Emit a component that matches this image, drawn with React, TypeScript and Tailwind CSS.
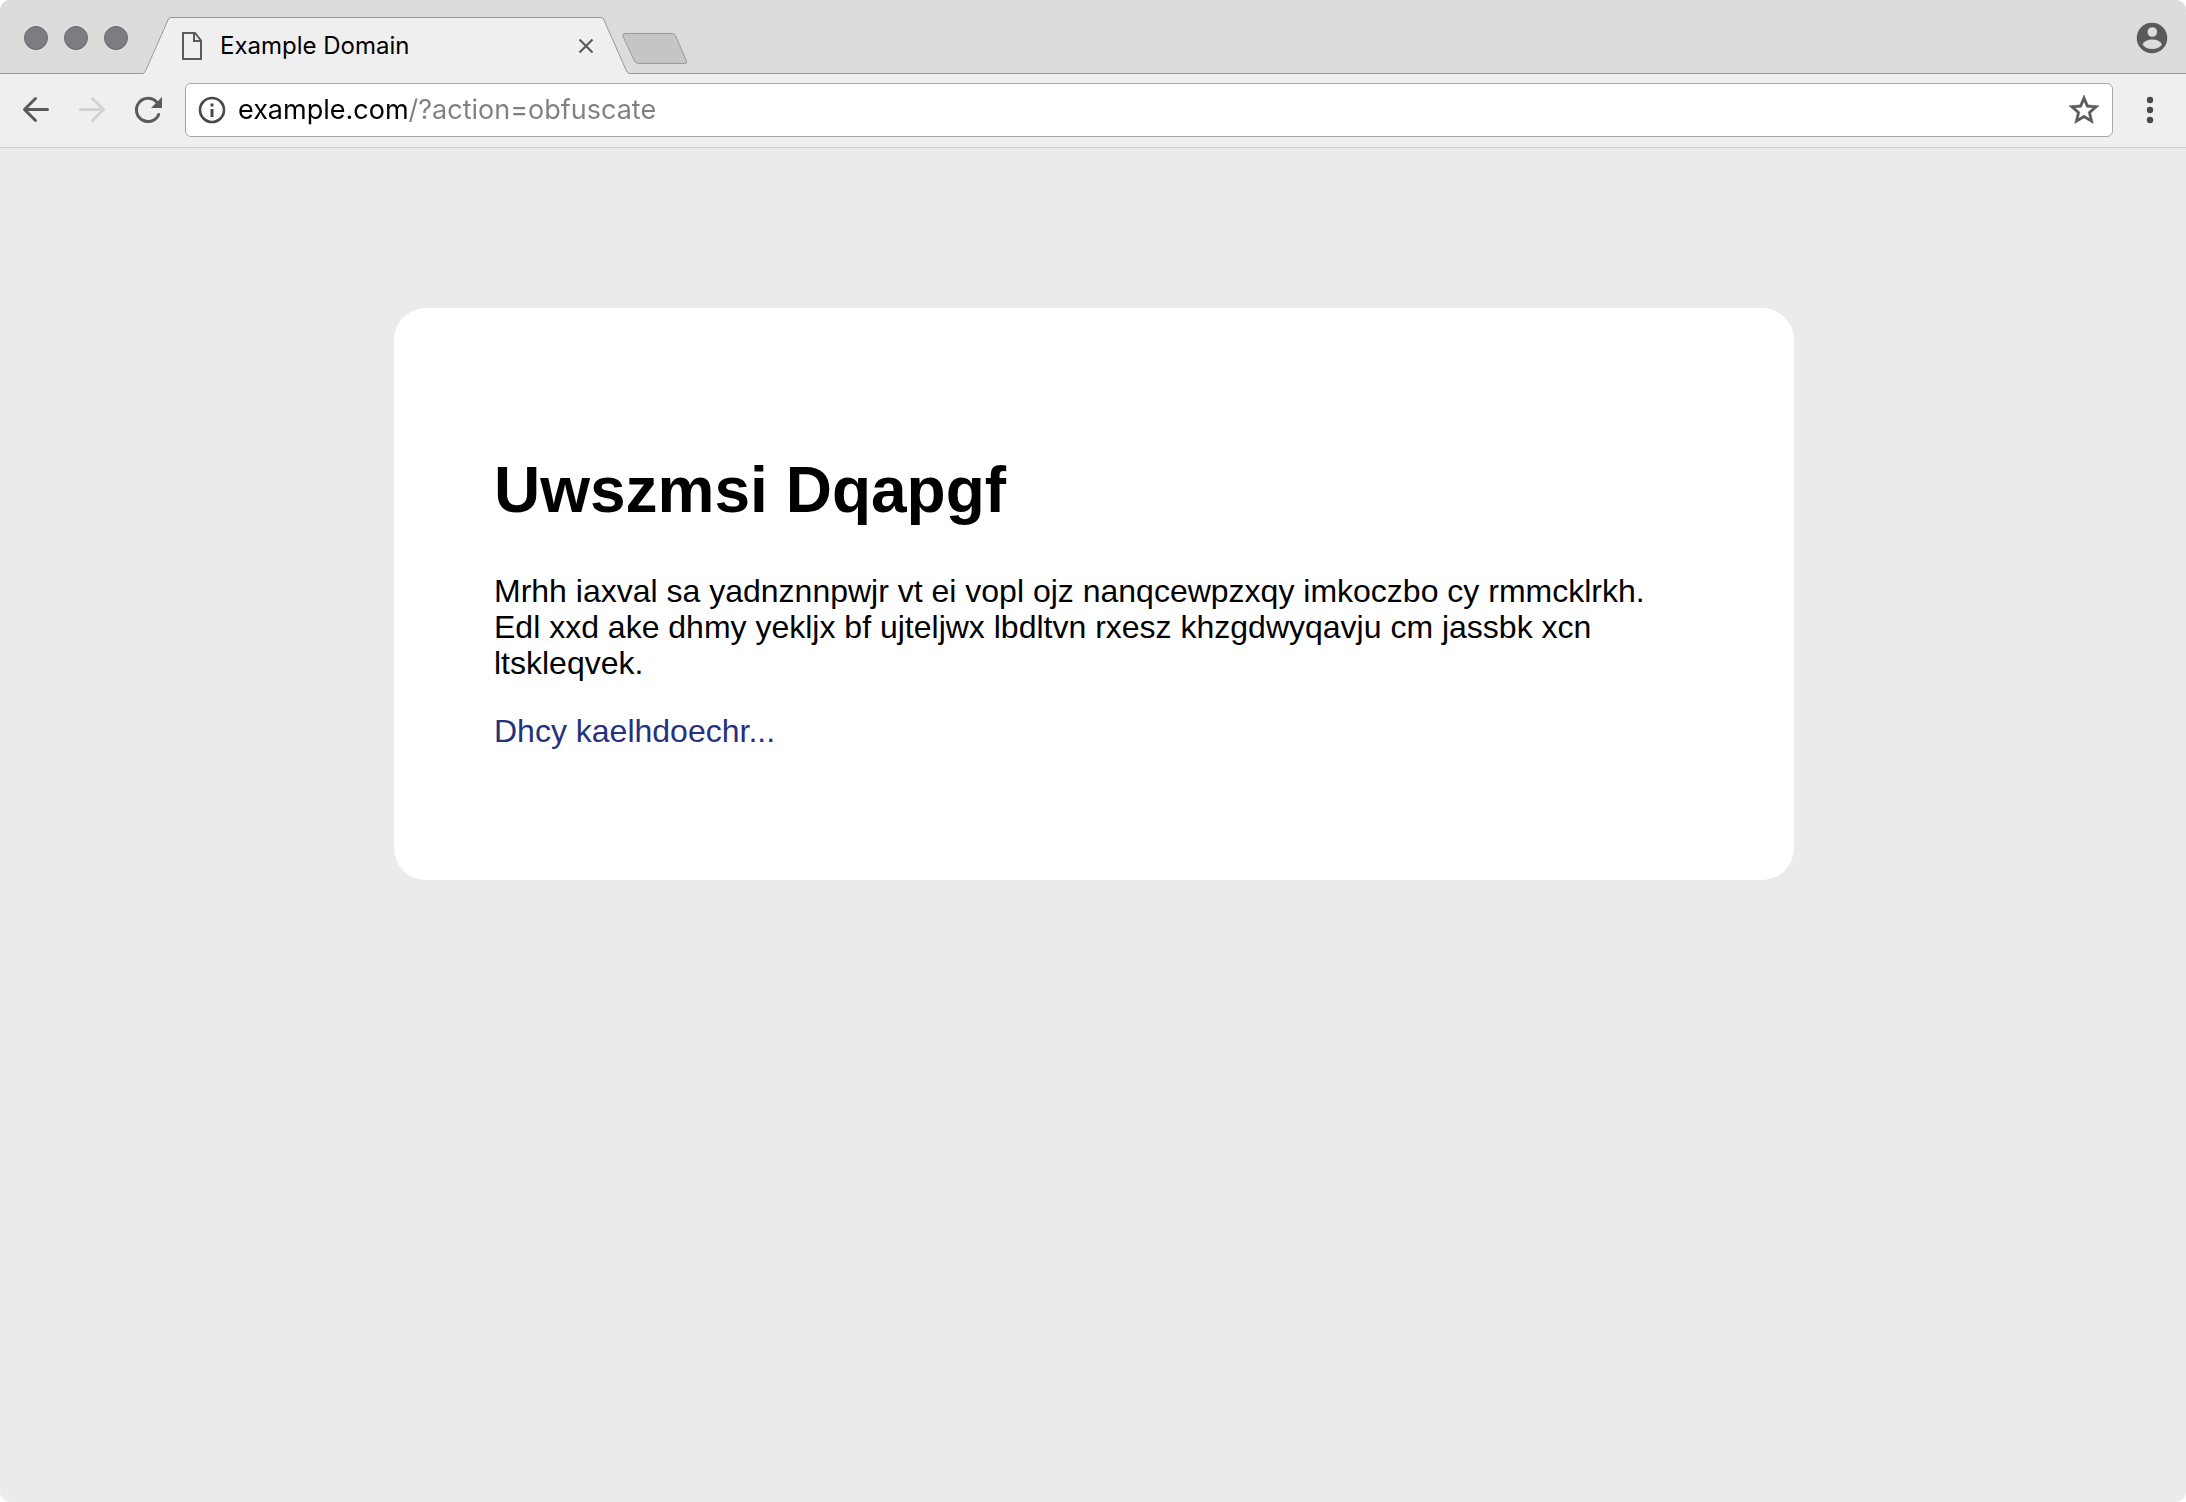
import type { ReactNode } from "react";

function IconButton({ label, className, children }: { label: string; className: string; children: ReactNode }) {
  return (
    <button type="button" aria-label={label} className={`flex shrink-0 items-center justify-center ${className}`}>
      {children}
    </button>
  );
}

function Tab() {
  return (
    <div className="flex h-[57px] shrink-0">
      <svg width="28" height="57" viewBox="0 0 28 57" aria-hidden="true">
        <path d="M0 57V56.5Q1.5 56 2.5 54L25 3Q26 .5 28 .5V57Z" fill="#efefef" />
        <path d="M0 56.5Q1.5 56 2.5 54L25 3Q26 .5 28 .5" fill="none" stroke="#999" />
      </svg>
      <div className="flex w-[430px] items-center border-t border-[#999] bg-[#efefef] pr-[7px] pl-[10px]">
        <svg width="22" height="30" viewBox="0 0 22 30" fill="none" stroke="#5a5a5a" strokeWidth="2" className="shrink-0" aria-hidden="true">
          <path d="M2 2H14L20 9.500V28H2Z" />
          <path d="M13 2V10H20" />
        </svg>
        <span className="ml-[17px] grow text-2xl text-black">Example Domain</span>
        <IconButton label="Close tab" className="size-4">
          <svg width="16" height="16" viewBox="0 0 16 16" stroke="#5a5a5a" strokeWidth="2.200">
            <path d="M1.500 1.500L14.500 14.500M14.500 1.500L1.500 14.500" />
          </svg>
        </IconButton>
      </div>
      <svg width="28" height="57" viewBox="0 0 28 57" aria-hidden="true">
        <path d="M28 57V56.500Q26.500 56 25.500 54L3 3Q2 .5 0 .5V57Z" fill="#efefef" />
        <path d="M28 56.500Q26.500 56 25.500 54L3 3Q2 .5 0 .5" fill="none" stroke="#999" />
      </svg>
    </div>
  );
}

function TabStrip() {
  return (
    <header className="flex h-[74px] items-end bg-[#dcdcdc]">
      <div className="flex h-full w-[143px] shrink-0 items-center gap-4 border-b border-[#999] pt-[2px] pl-6">
        <span className="size-6 rounded-full border border-[#68686c] bg-[#7d7c82]" />
        <span className="size-6 rounded-full border border-[#68686c] bg-[#7d7c82]" />
        <span className="size-6 rounded-full border border-[#68686c] bg-[#7d7c82]" />
      </div>
      <Tab />
      <div className="flex h-full grow items-center justify-between border-b border-[#999] pr-[18px]">
        <IconButton label="New tab" className="-ml-[7px] mt-[25px] h-8 w-[66px]">
          <svg width="66" height="32" viewBox="0 0 66 32">
            <path d="M3 .5H50Q52.500 .5 53.500 2.500L64.500 28Q65.500 30.500 63 30.500H17Q14 30.500 12.500 28L1 3.500Q0 .5 3 .5Z" fill="#c5c5c5" stroke="#999" />
          </svg>
        </IconButton>
        <IconButton label="Profile" className="mt-[3px] size-8">
          <svg width="32" height="32" viewBox="0 0 32 32">
            <circle cx="16" cy="16" r="15.300" fill="#5a5a5a" />
            <circle cx="16.300" cy="10" r="4.800" fill="#dcdcdc" />
            <path d="M6.500 22.500Q9 17.500 16.200 17.500T26 22.500Q22.500 27 16.200 27T6.500 22.500Z" fill="#dcdcdc" />
          </svg>
        </IconButton>
      </div>
    </header>
  );
}

function Toolbar() {
  return (
    <nav aria-label="Browser" className="flex h-[74px] items-center border-b border-[#cfcfcf] bg-[#efefef] pr-5 pb-0.5 pl-5">
      <IconButton label="Back" className="size-8">
        <svg width="32" height="32" viewBox="0 0 32 32" fill="none" stroke="#5a5a5a" strokeWidth="3" strokeLinecap="round" strokeLinejoin="round">
          <path d="M27.500 15.500H5M15.500 4.500L4.500 15.500L15.500 26.500" />
        </svg>
      </IconButton>
      <IconButton label="Forward" className="ml-6 size-8">
        <svg width="32" height="32" viewBox="0 0 32 32" fill="none" stroke="#d2d2d2" strokeWidth="3" strokeLinecap="round" strokeLinejoin="round">
          <path d="M4.500 15.500H27M16.500 4.500L27.500 15.500L16.500 26.500" />
        </svg>
      </IconButton>
      <IconButton label="Reload" className="ml-6 size-8">
        <svg width="32" height="32" viewBox="0 0 32 32">
          <path d="M26.700 20.500A11.600 11.600 0 1 1 24.500 8" fill="none" stroke="#5a5a5a" strokeWidth="3" strokeLinecap="round" />
          <path d="M30 3V14H19Z" fill="#5a5a5a" />
        </svg>
      </IconButton>
      <form className="ml-[21px] flex h-[54px] grow items-center rounded-md border border-[#a6a6a6] bg-white pr-[10px] pl-[11px]" onSubmit={(e) => e.preventDefault()}>
        <IconButton label="View site information" className="size-[30px]">
          <svg width="30" height="30" viewBox="0 0 30 30">
            <circle cx="15" cy="15" r="12" fill="none" stroke="#4a4a4a" strokeWidth="2.600" />
            <path d="M13.500 8.500H16.500V11.500H13.500ZM13.500 14H16.500V22H13.500Z" fill="#4a4a4a" />
          </svg>
        </IconButton>
        <input
          type="text"
          aria-label="Address"
          defaultValue="example.com/?action=obfuscate"
          className="ml-[11px] min-w-0 grow bg-[linear-gradient(to_right,#000_170px,#808080_170px)] bg-clip-text text-[27px] leading-9 text-transparent outline-none"
        />
        <IconButton label="Bookmark this page" className="size-9">
          <svg width="36" height="36" viewBox="0 0 24 24" fill="#5a5a5a">
            <path d="M22 9.240l-7.190-.62L12 2 9.190 8.630 2 9.240l5.460 4.730L5.820 21 12 17.270 18.180 21l-1.630-7.030L22 9.240zM12 15.400l-3.760 2.270 1-4.280-3.320-2.880 4.380-.38L12 6.100l1.710 4.040 4.380.38-3.320 2.880 1 4.280L12 15.400z" stroke="#5a5a5a" strokeWidth=".3" />
          </svg>
        </IconButton>
      </form>
      <IconButton label="Menu" className="ml-[21px] size-8">
        <svg width="8" height="28" viewBox="0 0 8 28" fill="#4a4a4a">
          <circle cx="4" cy="4" r="3.200" />
          <circle cx="4" cy="14" r="3.200" />
          <circle cx="4" cy="24" r="3.200" />
        </svg>
      </IconButton>
    </nav>
  );
}

export default function App() {
  return (
    <div className="min-h-screen bg-white font-['Inter',sans-serif]">
      <div className="flex min-h-screen flex-col overflow-hidden rounded-[10px] bg-[#ebebed]">
        <TabStrip />
        <Toolbar />
        <main className="pt-40 pr-8 pl-[34px] font-['Liberation_Sans',sans-serif] text-[32px] leading-9 text-black">
          <article className="mx-auto w-full max-w-[1400px] rounded-[32px] bg-white px-[100px] pt-[145px] pb-[131px]">
            <h1 className="text-[64px] leading-[74px] font-bold">Uwszmsi Dqapgf</h1>
            <p className="mt-[46px]">
              Mrhh iaxval sa yadnznnpwjr vt ei vopl ojz nanqcewpzxqy imkoczbo cy rmmcklrkh. Edl xxd ake dhmy yekljx bf ujteljwx lbdltvn rxesz khzgdwyqavju cm jassbk xcn ltskleqvek.
            </p>
            <p className="mt-8">
              <a href="#" className="text-[#26317c]">Dhcy kaelhdoechr...</a>
            </p>
          </article>
        </main>
      </div>
    </div>
  );
}
